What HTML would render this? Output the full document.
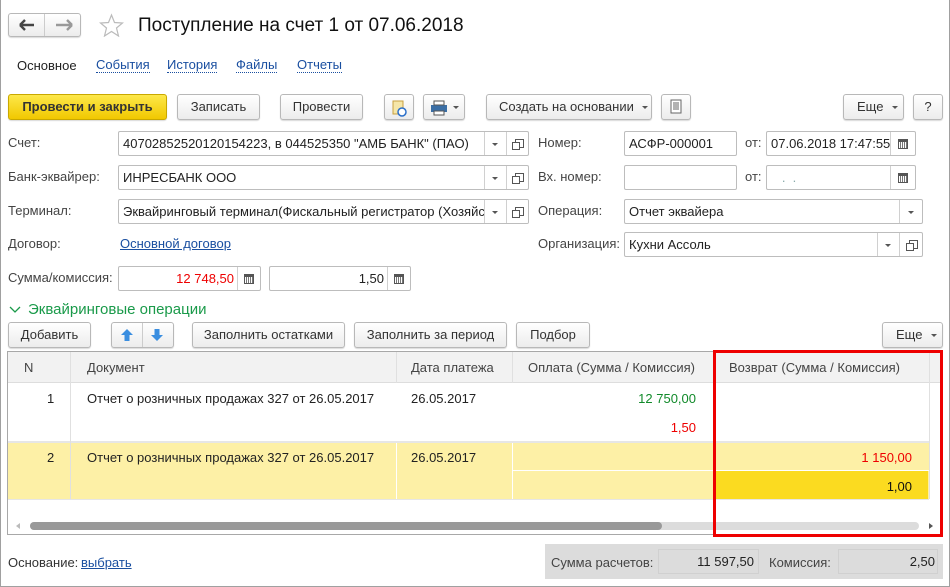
<!DOCTYPE html>
<html><head><meta charset="utf-8"><style>
*{box-sizing:border-box;margin:0;padding:0}
body{width:950px;height:587px;background:#fff;font-family:"Liberation Sans",Arial,sans-serif;font-size:13px;color:#333;position:relative;overflow:hidden}
.a{position:absolute}
.btn{position:absolute;border:1px solid #b8b8b8;border-radius:3px;background:linear-gradient(#fff,#ececec);box-shadow:0 1px 1px rgba(0,0,0,.15);text-align:center;line-height:23px;color:#333;white-space:nowrap}
.inp{position:absolute;border:1px solid #bdbdbd;border-radius:2px;background:#fff;height:25px;line-height:23px;padding-left:4px;white-space:nowrap;overflow:hidden;color:#222}
.sep{position:absolute;top:0;bottom:0;border-left:1px solid #d0d0d0}
.lbl{position:absolute;color:#444;line-height:16px}
.lnk{position:absolute;color:#1a4fa0;border-bottom:1px dotted #1a4fa0;line-height:14px}
.ul{position:absolute;color:#1a4fa0;text-decoration:underline}
.dd{position:absolute;width:0;height:0;border-left:3px solid transparent;border-right:3px solid transparent;border-top:3px solid #555}
.op{position:absolute;width:9px;height:9px;border:1px solid #555}
.op:after{content:"";position:absolute;left:-4px;top:2px;width:6px;height:6px;border:1px solid #555;background:#fff}
.cal{position:absolute;width:10px;height:10px;border:1px solid #555;border-top:3px solid #555;background:repeating-linear-gradient(90deg,#fff 0 1px,#777 1px 2px)}
.cell{position:absolute;white-space:nowrap}
</style></head><body>
<div class="a" style="left:0;top:0;width:950px;height:587px;border-left:1px solid #a0a0a0;border-right:1px solid #a0a0a0;border-bottom:1px solid #a0a0a0"></div>

<!-- nav -->
<div class="btn" style="left:8px;top:13px;width:73px;height:24px"></div>
<div class="a" style="left:44px;top:14px;height:22px;border-left:1px solid #ccc"></div>
<svg class="a" style="left:18px;top:17px" width="60" height="16"><path d="M2 8h14M2 8l5-5M2 8l5 5" stroke="#444" stroke-width="2.4" fill="none"/><path d="M54 8H38M54 8l-5-5M54 8l-5 5" stroke="#999" stroke-width="2.4" fill="none"/></svg>
<svg class="a" style="left:99px;top:13px" width="25" height="24"><path d="M12.5 2l3 7.5 8 .5-6 5 2 8-7-4.5-7 4.5 2-8-6-5 8-.5z" fill="none" stroke="#bbb" stroke-width="1.2"/></svg>
<div class="a" style="left:138px;top:14px;font-size:19px;color:#111;line-height:24px">Поступление на счет 1 от 07.06.2018</div>

<div class="a" style="left:17px;top:58px;color:#222">Основное</div>
<div class="lnk" style="left:96px;top:58px">События</div>
<div class="lnk" style="left:167px;top:58px">История</div>
<div class="lnk" style="left:236px;top:58px">Файлы</div>
<div class="lnk" style="left:297px;top:58px">Отчеты</div>

<!-- toolbar -->
<div class="btn" style="left:8px;top:94px;width:159px;height:26px;background:linear-gradient(#fde84a,#f1c800);border-color:#c9a800;font-weight:bold;color:#333;line-height:24px">Провести и закрыть</div>
<div class="btn" style="left:177px;top:94px;width:83px;height:26px;line-height:24px">Записать</div>
<div class="btn" style="left:280px;top:94px;width:83px;height:26px;line-height:24px">Провести</div>
<div class="btn" style="left:384px;top:94px;width:30px;height:26px"><svg width="28" height="24"><rect x="8" y="6" width="10" height="13" fill="#f5e6a8" stroke="#c8a040"/><circle cx="17" cy="17" r="4" fill="#fff" stroke="#2a6fc9" stroke-width="1.5"/></svg></div>
<div class="btn" style="left:423px;top:94px;width:42px;height:26px"><svg width="40" height="24"><rect x="7" y="10" width="16" height="7" fill="#3a6ea5"/><rect x="10" y="6" width="10" height="4" fill="#fff" stroke="#555"/><rect x="10" y="16" width="10" height="4" fill="#fff" stroke="#555"/><path d="M29 11h6l-3 3z" fill="#555"/></svg></div>
<div class="btn" style="left:486px;top:94px;width:166px;height:26px;line-height:24px;text-align:left;padding-left:12px">Создать на основании<div class="dd" style="left:155px;top:11px"></div></div>
<div class="btn" style="left:661px;top:94px;width:30px;height:26px"><svg width="28" height="24"><rect x="9" y="5" width="10" height="13" fill="#fff" stroke="#666"/><path d="M11 8h6M11 10h6M11 12h6M11 14h6" stroke="#666"/></svg></div>
<div class="btn" style="left:843px;top:94px;width:61px;height:26px;line-height:24px;text-align:left;padding-left:13px">Еще<div class="dd" style="left:48px;top:11px"></div></div>
<div class="btn" style="left:913px;top:94px;width:30px;height:26px;line-height:24px">?</div>

<!-- fields -->
<div class="lbl" style="left:8px;top:135px">Счет:</div>
<div class="inp" style="left:118px;top:131px;width:411px">40702852520120154223, в 044525350 "АМБ БАНК" (ПАО)<div class="sep" style="left:365px"></div><div class="sep" style="left:387px"></div><div class="dd" style="left:373px;top:11px"></div><div class="op" style="left:396px;top:7px"></div></div>
<div class="lbl" style="left:8px;top:169px">Банк-эквайрер:</div>
<div class="inp" style="left:118px;top:165px;width:411px">ИНРЕСБАНК ООО<div class="sep" style="left:365px"></div><div class="sep" style="left:387px"></div><div class="dd" style="left:373px;top:11px"></div><div class="op" style="left:396px;top:7px"></div></div>
<div class="lbl" style="left:8px;top:203px">Терминал:</div>
<div class="inp" style="left:118px;top:199px;width:411px">Эквайринговый терминал(Фискальный регистратор (Хозяйст<div class="a" style="left:365px;top:0;width:45px;height:23px;background:#fff;border-left:1px solid #d0d0d0"></div><div class="sep" style="left:387px"></div><div class="dd" style="left:373px;top:11px"></div><div class="op" style="left:396px;top:7px"></div></div>
<div class="lbl" style="left:8px;top:236px">Договор:</div>
<div class="ul" style="left:120px;top:236px">Основной договор</div>
<div class="lbl" style="left:8px;top:270px">Сумма/комиссия:</div>
<div class="inp" style="left:118px;top:266px;width:143px;text-align:right;padding-right:26px;color:#e00">12 748,50<div class="sep" style="left:118px"></div><div class="cal" style="left:125px;top:7px"></div></div>
<div class="inp" style="left:269px;top:266px;width:142px;text-align:right;padding-right:26px">1,50<div class="sep" style="left:117px"></div><div class="cal" style="left:124px;top:7px"></div></div>

<div class="lbl" style="left:538px;top:135px">Номер:</div>
<div class="inp" style="left:624px;top:131px;width:113px">АСФР-000001</div>
<div class="lbl" style="left:745px;top:135px">от:</div>
<div class="inp" style="left:766px;top:131px;width:150px">07.06.2018 17:47:55<div class="sep" style="left:123px"></div><div class="cal" style="left:131px;top:7px"></div></div>
<div class="lbl" style="left:538px;top:169px">Вх. номер:</div>
<div class="inp" style="left:624px;top:165px;width:113px"></div>
<div class="lbl" style="left:745px;top:169px">от:</div>
<div class="inp" style="left:766px;top:165px;width:150px;color:#8aa">&nbsp;&nbsp;&nbsp;.&nbsp;&nbsp;.<div class="sep" style="left:123px"></div><div class="cal" style="left:131px;top:7px"></div></div>
<div class="lbl" style="left:538px;top:203px">Операция:</div>
<div class="inp" style="left:624px;top:199px;width:299px">Отчет эквайера<div class="sep" style="left:274px"></div><div class="dd" style="left:283px;top:11px"></div></div>
<div class="lbl" style="left:538px;top:236px">Организация:</div>
<div class="inp" style="left:624px;top:232px;width:299px">Кухни Ассоль<div class="sep" style="left:252px"></div><div class="sep" style="left:274px"></div><div class="dd" style="left:260px;top:11px"></div><div class="op" style="left:284px;top:7px"></div></div>

<!-- section -->
<svg class="a" style="left:9px;top:305px" width="12" height="10"><path d="M1 2l5 5 5-5" stroke="#1a9a4a" stroke-width="1.3" fill="none"/></svg>
<div class="a" style="left:28px;top:300px;font-size:15px;color:#1a9a4a;line-height:20px">Эквайринговые операции</div>

<div class="btn" style="left:8px;top:322px;width:83px;height:26px;line-height:24px">Добавить</div>
<div class="btn" style="left:111px;top:322px;width:63px;height:26px"><div class="a" style="left:30px;top:0;bottom:0;border-left:1px solid #ccc"></div><svg class="a" style="left:7px;top:5px" width="50" height="14"><path d="M8 1l6 6h-3.5v6h-5V7H2z" fill="#3a8ee0"/><path d="M38 13l6-6h-3.5V1h-5v6H32z" fill="#3a8ee0"/></svg></div>
<div class="btn" style="left:192px;top:322px;width:153px;height:26px;line-height:24px">Заполнить остатками</div>
<div class="btn" style="left:354px;top:322px;width:153px;height:26px;line-height:24px">Заполнить за период</div>
<div class="btn" style="left:516px;top:322px;width:74px;height:26px;line-height:24px">Подбор</div>
<div class="btn" style="left:882px;top:322px;width:61px;height:26px;line-height:24px;text-align:left;padding-left:13px">Еще<div class="dd" style="left:48px;top:11px"></div></div>

<!-- table -->
<div class="a" style="left:7px;top:351px;width:936px;height:184px;border:1px solid #a8a8a8;background:#fff"></div>
<div class="a" style="left:8px;top:352px;width:934px;height:31px;background:#f2f2f2;border-bottom:1px solid #ddd"></div>
<div class="a" style="left:8px;top:443px;width:921px;height:56px;background:#fdf0a6"></div>
<div class="a" style="left:716px;top:471px;width:212px;height:28px;background:#fbdb20"></div>
<div class="a" style="left:512px;top:470px;width:417px;border-top:1px solid #fff"></div>
<div class="a" style="left:8px;top:441px;width:921px;border-top:2px solid #e6e6e6"></div>
<div class="a" style="left:8px;top:499px;width:921px;border-top:1px solid #e6e6e6"></div>
<div class="a" style="left:70px;top:352px;height:147px;border-left:1px solid #e0e0e0"></div>
<div class="a" style="left:396px;top:352px;height:31px;border-left:1px solid #e0e0e0"></div>
<div class="a" style="left:396px;top:443px;height:56px;border-left:1px solid #fff"></div>
<div class="a" style="left:512px;top:352px;height:31px;border-left:1px solid #e0e0e0"></div>
<div class="a" style="left:512px;top:443px;height:56px;border-left:1px solid #fff"></div>
<div class="a" style="left:714px;top:352px;height:31px;border-left:1px solid #e0e0e0"></div>
<div class="a" style="left:929px;top:352px;height:147px;border-left:1px solid #e0e0e0"></div>
<div class="cell" style="left:24px;top:360px;color:#444">N</div>
<div class="cell" style="left:87px;top:360px;color:#444">Документ</div>
<div class="cell" style="left:411px;top:360px;color:#444">Дата платежа</div>
<div class="cell" style="left:528px;top:360px;color:#444">Оплата (Сумма / Комиссия)</div>
<div class="cell" style="left:729px;top:360px;color:#444">Возврат (Сумма / Комиссия)</div>
<div class="cell" style="left:47px;top:391px;color:#222">1</div>
<div class="cell" style="left:87px;top:391px;color:#222">Отчет о розничных продажах 327 от 26.05.2017</div>
<div class="cell" style="left:411px;top:391px;color:#222">26.05.2017</div>
<div class="cell" style="right:254px;top:391px;color:#118a2a">12 750,00</div>
<div class="cell" style="right:254px;top:420px;color:#e00">1,50</div>
<div class="cell" style="left:47px;top:450px;color:#222">2</div>
<div class="cell" style="left:87px;top:450px;color:#222">Отчет о розничных продажах 327 от 26.05.2017</div>
<div class="cell" style="left:411px;top:450px;color:#222">26.05.2017</div>
<div class="cell" style="right:38px;top:450px;color:#e00">1 150,00</div>
<div class="cell" style="right:38px;top:479px;color:#111">1,00</div>
<div class="a" style="left:30px;top:522px;width:889px;height:8px;background:#dcdcdc;border-radius:4px"></div>
<div class="a" style="left:30px;top:522px;width:632px;height:8px;background:#999;border-radius:4px"></div>
<div class="a" style="left:16px;top:523px;border-right:4px solid #bbb;border-top:3px solid transparent;border-bottom:3px solid transparent"></div>
<div class="a" style="left:929px;top:523px;border-left:4px solid #555;border-top:3px solid transparent;border-bottom:3px solid transparent"></div>

<div class="a" style="left:713px;top:350px;width:230px;height:187px;border:3px solid #e00"></div>

<!-- footer -->
<div class="lbl" style="left:8px;top:555px;color:#333">Основание:</div>
<div class="ul" style="left:81px;top:555px">выбрать</div>
<div class="a" style="left:545px;top:544px;width:398px;height:35px;background:#dcdcdc"></div>
<div class="lbl" style="left:551px;top:555px">Сумма расчетов:</div>
<div class="a" style="left:658px;top:549px;width:101px;height:25px;border:1px solid #d0d0d0;text-align:right;padding-right:4px;line-height:23px;color:#222">11 597,50</div>
<div class="lbl" style="left:769px;top:555px">Комиссия:</div>
<div class="a" style="left:838px;top:549px;width:100px;height:25px;border:1px solid #d0d0d0;text-align:right;padding-right:2px;line-height:23px;color:#222">2,50</div>
</body></html>
